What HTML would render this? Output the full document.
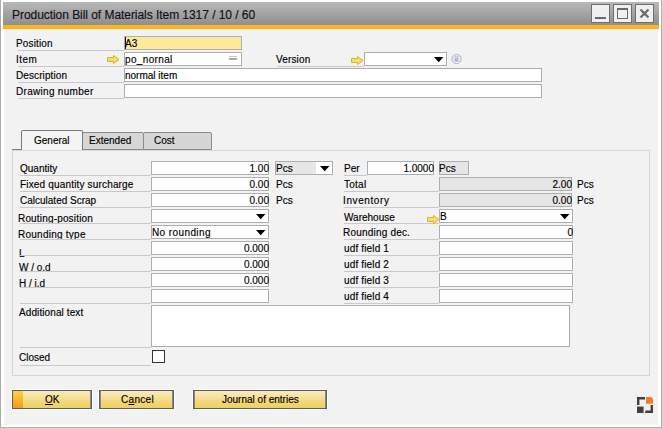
<!DOCTYPE html>
<html><head><meta charset="utf-8">
<style>
*{margin:0;padding:0;box-sizing:border-box}
html,body{width:663px;height:429px;overflow:hidden;background:#fff}
body{position:relative;font-family:"Liberation Sans",sans-serif;font-size:10px;color:#000}
.a{position:absolute}
.t{position:absolute;white-space:nowrap;line-height:11px;-webkit-text-stroke:0.15px #000}
.ul{position:absolute;height:1px;background:#c9c9c9}
.box{position:absolute;background:#fff;border:1px solid #abafaf;height:14px}
.r{text-align:right}
.btn{position:absolute;height:19px;border:1px solid #5e5e5e;background:linear-gradient(#faebbe,#f6e1a0 35%,#f3d87c 60%,#efcf62);box-shadow:0 0 0 1px #fff,inset 1px 0 #8a8a8a,inset -1px 0 #8a8a8a}
</style></head><body>
<div class="a" style="left:0;top:0;width:1px;height:429px;background:#ababab"></div>
<div class="a" style="left:4px;top:29px;width:654px;height:396px;background:#f2f2f2"></div>
<div class="a" style="left:661px;top:0;width:1px;height:428px;background:#b0b0b0"></div>
<div class="a" style="left:662px;top:0;width:1px;height:429px;background:#d8d8d8"></div>
<div class="a" style="left:0;top:427px;width:662px;height:1px;background:#b0b0b0"></div>
<div class="a" style="left:0;top:428px;width:663px;height:1px;background:#d8d8d8"></div>
<div class="a" style="left:3px;top:2px;width:656px;height:23px;background:linear-gradient(#b8b9b9,#8e8e8e)"></div>
<div class="a" style="left:3px;top:25px;width:656px;height:4px;background:#fdb515"></div>
<div class="t" style="left:12px;top:8px;font-size:12px;line-height:14px;color:#1a1020;letter-spacing:-0.05px">Production Bill of Materials Item 1317 / 10 / 60</div>
<div class="a" style="left:591px;top:4px;width:19px;height:19px;border:1px solid #6e6e6e;background:#f0f0f0"><div class="a" style="left:3px;top:12px;width:11px;height:2px;background:#6a6a6a"></div></div>
<div class="a" style="left:613px;top:4px;width:19px;height:19px;border:1px solid #6e6e6e;background:#f0f0f0"><div class="a" style="left:3px;top:3px;width:11px;height:11px;border:1px solid #6a6a6a;border-top-width:2px"></div></div>
<div class="a" style="left:635px;top:4px;width:19px;height:19px;border:1px solid #6e6e6e;background:#f0f0f0"><svg class="a" style="left:0;top:0" width="17" height="17"><path d="M4.5 4.5L12.5 12.5M12.5 4.5L4.5 12.5" stroke="#6e6e6e" stroke-width="2.3"/><rect x="6.7" y="6.7" width="3.6" height="3.6" fill="#6e6e6e"/></svg></div>
<div class="t" style="left:16px;top:38px;letter-spacing:0.15px;">Position</div>
<div class="ul" style="left:18px;top:50px;width:106px"></div>
<div class="t" style="left:16px;top:54px;letter-spacing:0.5px;">Item</div>
<div class="ul" style="left:18px;top:66px;width:106px"></div>
<div class="t" style="left:16px;top:70px;letter-spacing:0.1px;">Description</div>
<div class="ul" style="left:18px;top:82px;width:106px"></div>
<div class="t" style="left:16px;top:86px;letter-spacing:0.3px;">Drawing number</div>
<div class="ul" style="left:18px;top:98px;width:106px"></div>
<div class="box" style="left:124px;top:36px;width:118px;height:14px;background:#fde99b;"></div>
<div class="t" style="left:125px;top:38px;">A3</div>
<div class="a" style="left:125px;top:37px;width:1px;height:12px;background:#101040"></div>
<div class="box" style="left:124px;top:52px;width:118px;height:14px;"></div>
<div class="t" style="left:125px;top:54px;letter-spacing:0.35px">po_nornal</div>
<div class="a" style="left:229px;top:56px;width:8px;height:1px;background:#cbcbcb"></div>
<div class="a" style="left:229px;top:58px;width:8px;height:2px;background:#a9a9a9"></div>
<svg class="a" style="left:107px;top:55px" width="13" height="9"><path d="M0.5 2.5H6.5V0.5L12 4.5L6.5 8.5V6.5H0.5Z" fill="#f6de6a" stroke="#d9b52c" stroke-width="1"/></svg>
<div class="box" style="left:124px;top:68px;width:418px;height:14px;"></div>
<div class="t" style="left:125px;top:70px;">normal item</div>
<div class="box" style="left:124px;top:84px;width:418px;height:14px;"></div>
<div class="t" style="left:276px;top:54px;letter-spacing:0.15px;">Version</div>
<div class="ul" style="left:277px;top:66px;width:87px"></div>
<svg class="a" style="left:351px;top:56px" width="13" height="9"><path d="M0.5 2.5H6.5V0.5L12 4.5L6.5 8.5V6.5H0.5Z" fill="#f6de6a" stroke="#d9b52c" stroke-width="1"/></svg>
<div class="box" style="left:364px;top:52px;width:83px;height:14px;"></div>
<svg class="a" style="left:434px;top:57px" width="10" height="6"><path d="M0 0H9.4L4.7 5.2Z" fill="#000"/></svg>
<svg class="a" style="left:451px;top:54px" width="11" height="10"><defs><radialGradient id="cg" cx="0.5" cy="0.6" r="0.6"><stop offset="0" stop-color="#fff"/><stop offset="1" stop-color="#dfe4f2"/></radialGradient></defs><circle cx="5.5" cy="5" r="4.6" fill="url(#cg)" stroke="#aab3cf" stroke-width="1"/><rect x="3.5" y="2.5" width="4" height="0.8" fill="#9aa0b4"/><rect x="3.5" y="4.4" width="4" height="1" fill="#7d8398"/><rect x="3.5" y="6.3" width="4" height="1" fill="#7d8398"/></svg>
<div class="a" style="left:12px;top:149px;width:638px;height:227px;border:1px solid #d4d4d4;border-top:none;background:#f2f2f2"></div>
<div class="a" style="left:12px;top:149px;width:10px;height:1px;background:#7a7a7a"></div>
<div class="a" style="left:82px;top:132px;width:62px;height:18px;border:1px solid #8a8a8a;border-radius:2px 2px 0 0;background:#d6d6d6"></div>
<div class="a" style="left:143px;top:132px;width:69px;height:18px;border:1px solid #8a8a8a;border-radius:2px 2px 0 0;background:#d6d6d6"></div>
<div class="a" style="left:21px;top:130px;width:62px;height:20px;border:1px solid #7a7a7a;border-bottom:none;border-radius:2px 2px 0 0;background:#f4f4f4"></div>
<div class="a" style="left:12px;top:150px;width:638px;height:1px;background:#d8d8d8"></div>
<div class="t" style="left:34px;top:135px;">General</div>
<div class="t" style="left:89px;top:135px;">Extended</div>
<div class="t" style="left:154px;top:135px;">Cost</div>
<div class="t" style="left:20px;top:163px;">Quantity</div>
<div class="ul" style="left:20px;top:175px;width:131px"></div>
<div class="box" style="left:151px;top:161px;width:118px;height:14px;"></div>
<div class="t" style="left:20px;top:179px;letter-spacing:0.17px;">Fixed quantity surcharge</div>
<div class="ul" style="left:20px;top:191px;width:131px"></div>
<div class="box" style="left:151px;top:177px;width:118px;height:14px;"></div>
<div class="t" style="left:20px;top:195px;">Calculated Scrap</div>
<div class="ul" style="left:20px;top:207px;width:131px"></div>
<div class="box" style="left:151px;top:193px;width:118px;height:14px;"></div>
<div class="t" style="left:18px;top:213px;letter-spacing:0.17px;">Routing-position</div>
<div class="ul" style="left:20px;top:223px;width:131px"></div>
<div class="box" style="left:151px;top:209px;width:118px;height:14px;"></div>
<div class="t" style="left:18px;top:229px;letter-spacing:0.25px;">Rounding type</div>
<div class="ul" style="left:20px;top:239px;width:131px"></div>
<div class="box" style="left:151px;top:225px;width:118px;height:14px;"></div>
<div class="t" style="left:19px;top:248px;">L</div>
<div class="ul" style="left:20px;top:255px;width:131px"></div>
<div class="box" style="left:151px;top:241px;width:118px;height:14px;"></div>
<div class="t" style="left:19px;top:262px;">W / o.d</div>
<div class="ul" style="left:20px;top:271px;width:131px"></div>
<div class="box" style="left:151px;top:257px;width:118px;height:14px;"></div>
<div class="t" style="left:19px;top:278px;">H / i.d</div>
<div class="ul" style="left:20px;top:287px;width:131px"></div>
<div class="box" style="left:151px;top:273px;width:118px;height:14px;"></div>
<div class="ul" style="left:20px;top:303px;width:131px"></div>
<div class="box" style="left:151px;top:289px;width:118px;height:14px;"></div>
<div class="t r" style="left:119px;width:150px;top:163px;">1.00</div>
<div class="t r" style="left:119px;width:150px;top:179px;">0.00</div>
<div class="t r" style="left:119px;width:150px;top:195px;">0.00</div>
<div class="t r" style="left:119px;width:150px;top:243px;">0.000</div>
<div class="t r" style="left:119px;width:150px;top:259px;">0.000</div>
<div class="t r" style="left:119px;width:150px;top:275px;">0.000</div>
<svg class="a" style="left:256px;top:214px" width="10" height="6"><path d="M0 0H9.4L4.7 5.2Z" fill="#000"/></svg>
<svg class="a" style="left:256px;top:230px" width="10" height="6"><path d="M0 0H9.4L4.7 5.2Z" fill="#000"/></svg>
<div class="t" style="left:152px;top:227px;letter-spacing:0.4px;">No rounding</div>
<div class="box" style="left:275px;top:161px;width:58px;height:14px;background:linear-gradient(90deg,#e6e6e6 40px,#fff 40px);"></div>
<svg class="a" style="left:320px;top:166px" width="10" height="6"><path d="M0 0H9.4L4.7 5.2Z" fill="#000"/></svg>
<div class="t" style="left:276px;top:163px;">Pcs</div>
<div class="t" style="left:276px;top:179px;">Pcs</div>
<div class="t" style="left:276px;top:195px;">Pcs</div>
<div class="t" style="left:19px;top:307px;letter-spacing:0.1px;">Additional text</div>
<div class="ul" style="left:20px;top:303px;width:131px"></div>
<div class="ul" style="left:20px;top:347px;width:131px"></div>
<div class="box" style="left:151px;top:305px;width:419px;height:42px;"></div>
<div class="t" style="left:19px;top:352px;">Closed</div>
<div class="ul" style="left:20px;top:365px;width:131px"></div>
<div class="a" style="left:152px;top:350px;width:13px;height:13px;border:1px solid #333;background:#fff"></div>
<div class="t" style="left:344px;top:163px;">Per</div>
<div class="ul" style="left:344px;top:175px;width:23px"></div>
<div class="box" style="left:367px;top:161px;width:67px;height:14px;"></div>
<div class="t r" style="left:284px;width:150px;top:163px;">1.0000</div>
<div class="box" style="left:439px;top:161px;width:30px;height:14px;background:#e6e6e6;"></div>
<div class="t" style="left:439px;top:163px;">Pcs</div>
<div class="t" style="left:344px;top:179px;letter-spacing:0.25px;">Total</div>
<div class="ul" style="left:344px;top:191px;width:95px"></div>
<div class="box" style="left:439px;top:177px;width:133px;height:14px;background:#e6e6e6;"></div>
<div class="t" style="left:343px;top:195px;letter-spacing:0.6px;">Inventory</div>
<div class="ul" style="left:344px;top:207px;width:95px"></div>
<div class="box" style="left:439px;top:193px;width:133px;height:14px;background:#e6e6e6;"></div>
<div class="t" style="left:344px;top:212px;">Warehouse</div>
<div class="ul" style="left:344px;top:223px;width:95px"></div>
<div class="box" style="left:439px;top:209px;width:134px;height:14px;"></div>
<div class="t" style="left:343px;top:227px;letter-spacing:0.2px;">Rounding dec.</div>
<div class="ul" style="left:344px;top:239px;width:95px"></div>
<div class="box" style="left:439px;top:225px;width:134px;height:14px;"></div>
<div class="t" style="left:344px;top:243px;letter-spacing:0.15px;">udf field 1</div>
<div class="ul" style="left:344px;top:255px;width:95px"></div>
<div class="box" style="left:439px;top:241px;width:134px;height:14px;"></div>
<div class="t" style="left:344px;top:259px;letter-spacing:0.15px;">udf field 2</div>
<div class="ul" style="left:344px;top:271px;width:95px"></div>
<div class="box" style="left:439px;top:257px;width:134px;height:14px;"></div>
<div class="t" style="left:344px;top:275px;letter-spacing:0.15px;">udf field 3</div>
<div class="ul" style="left:344px;top:287px;width:95px"></div>
<div class="box" style="left:439px;top:273px;width:134px;height:14px;"></div>
<div class="t" style="left:344px;top:291px;letter-spacing:0.15px;">udf field 4</div>
<div class="ul" style="left:344px;top:303px;width:95px"></div>
<div class="box" style="left:439px;top:289px;width:134px;height:14px;"></div>
<div class="t r" style="left:422px;width:150px;top:179px;">2.00</div>
<div class="t r" style="left:422px;width:150px;top:195px;">0.00</div>
<div class="t" style="left:577px;top:179px;">Pcs</div>
<div class="t" style="left:577px;top:195px;">Pcs</div>
<svg class="a" style="left:427px;top:215px" width="13" height="9"><path d="M0.5 2.5H6.5V0.5L12 4.5L6.5 8.5V6.5H0.5Z" fill="#f6de6a" stroke="#d9b52c" stroke-width="1"/></svg>
<div class="t" style="left:440px;top:211px;">B</div>
<svg class="a" style="left:560px;top:214px" width="10" height="6"><path d="M0 0H9.4L4.7 5.2Z" fill="#000"/></svg>
<div class="t r" style="left:423px;width:150px;top:227px;">0</div>
<div class="btn" style="left:12px;top:390px;width:80px"><div class="a" style="left:0;top:0;width:10px;height:17px;background:linear-gradient(#fcd245,#f39a18)"></div></div>
<div class="t" style="left:45px;top:394px;"><u>O</u>K</div>
<div class="btn" style="left:99px;top:390px;width:75px"></div>
<div class="t" style="left:121px;top:394px;letter-spacing:0.3px">C<u>a</u>ncel</div>
<div class="btn" style="left:193px;top:390px;width:134px"></div>
<div class="t" style="left:222px;top:394px;">Journal of entries</div>
<svg class="a" style="left:637px;top:397px" width="16" height="16"><path d="M0 0H8V2.4H2.4V8H0Z" fill="#404040"/><path d="M9 0H13.2Q16 0 16 2.8V6.8H9Z" fill="#f47c20"/><path d="M0 9.6H6.6V16H0Z" fill="#404040"/><path d="M13.6 8H16V16H8.3V13.5H13.6Z" fill="#404040"/></svg>
</body></html>
